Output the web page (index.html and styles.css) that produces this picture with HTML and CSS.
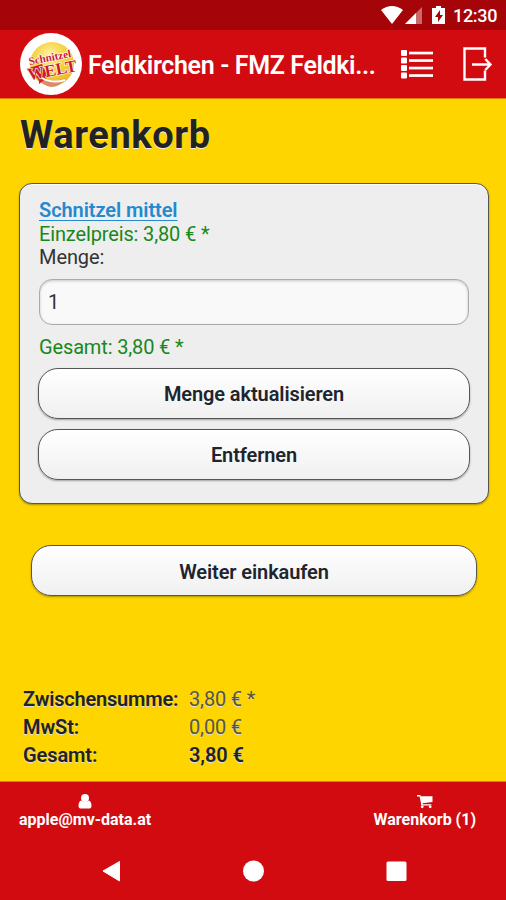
FILE: index.html
```html
<!DOCTYPE html>
<html lang="de">
<head>
<meta charset="utf-8">
<meta name="viewport" content="width=device-width, initial-scale=1">
<title>Warenkorb</title>
<link rel="stylesheet" href="styles.css">
</head>
<body>
<div class="statusbar">
  <svg class="status-icons" width="68" height="30" viewBox="0 0 68 30">
    <path d="M1 10Q12 2 23 10L12 24Z" fill="#fff"/>
    <path d="M42 7V24H25Z" fill="#fff" opacity=".4"/>
    <path d="M36 13V24H25Z" fill="#fff"/>
    <path d="M56 6h5v2h4v16H52V8h4Z" fill="#fff"/>
    <path d="M60 10l-5 7h3v5l5-7h-3Z" fill="#a50509"/>
  </svg>
  <span class="clock">12:30</span>
</div>
<header class="topbar">
  <svg class="logo" width="62" height="62" viewBox="0 0 62 62">
    <defs>
      <radialGradient id="ball" cx=".45" cy=".3" r=".75">
        <stop offset="0" stop-color="#fff3a8"/>
        <stop offset=".45" stop-color="#f6d443"/>
        <stop offset="1" stop-color="#e9b51d"/>
      </radialGradient>
    </defs>
    <circle cx="31" cy="31" r="31" fill="#fff"/>
    <circle cx="32" cy="31" r="22" fill="url(#ball)"/>
    <path d="M18 45Q30 51 46 45Q40 54 31 54Q23 53 18 45Z" fill="#dc8a68"/>
    <path d="M6 36L22 31L28 44L19 51Q20 44 12 43L14 39Z" fill="#cf1f2c"/>
    <path d="M22 45Q32 51 45 47" fill="none" stroke="#fff" stroke-width="2"/>
    <g class="logo-text" transform="rotate(-11 31 31)">
      <text class="logo-top" x="31" y="28" text-anchor="middle">Schnitzel</text>
      <text class="logo-main" x="31" y="43" text-anchor="middle">WELT</text>
    </g>
  </svg>
  <div class="store">Feldkirchen - FMZ Feldki...</div>
  <svg class="icon-list" width="32" height="29" viewBox="0 0 32 29">
    <g fill="#fff">
      <rect y="0" width="6" height="6" rx="1"/><rect y="7.5" width="6" height="6" rx="1"/><rect y="15" width="6" height="6" rx="1"/><rect y="22.5" width="6" height="6" rx="1"/>
      <rect x="8" y="1.7" width="24" height="2.7"/><rect x="8" y="9.2" width="24" height="2.7"/><rect x="8" y="16.7" width="24" height="2.7"/><rect x="8" y="24.2" width="24" height="2.7"/>
    </g>
  </svg>
  <svg class="icon-exit" width="30" height="34" viewBox="0 0 30 34">
    <path d="M22 10.5V1.5H1.500V32.5H22V23.500M9 17.500H27.500M22.300 12L27.500 17.500L22.300 23" fill="none" stroke="#fff" stroke-width="2.400"/>
  </svg>
</header>
<main class="content">
  <h1 class="title">Warenkorb</h1>
  <section class="card">
    <div class="line"><a class="product" href="#">Schnitzel mittel</a></div>
    <div class="line price">Einzelpreis: 3,80 € *</div>
    <div class="line menge">Menge:</div>
    <input class="qty" type="text" value="1" aria-label="Menge">
    <div class="line price total">Gesamt: 3,80 € *</div>
    <button class="btn">Menge aktualisieren</button>
    <button class="btn">Entfernen</button>
  </section>
  <button class="btn shop">Weiter einkaufen</button>
  <dl class="summary">
    <dt class="label wide">Zwischensumme:</dt><dd>3,80 € *</dd>
    <dt class="label">MwSt:</dt><dd>0,00 €</dd>
    <dt class="label">Gesamt:</dt><dd class="sum">3,80 €</dd>
  </dl>
</main>
<footer class="bottombar">
  <div class="tabs">
    <div class="tab">
      <svg width="14" height="15" viewBox="0 0 14 15"><circle cx="7" cy="4" r="4" fill="#fff"/><path d="M3 6.500Q7 9 11 6.500Q13.500 7.500 13.500 12Q13.500 14.500 11.500 14.500H2.500Q.5 14.500.5 12Q.5 7.500 3 6.500Z" fill="#fff"/></svg>
      <span class="mail">apple@mv-data.at</span>
    </div>
    <div class="tab">
      <svg width="16" height="15" viewBox="0 0 16 15"><path d="M0 1H3.300L3.800 2.300H15.500V8L5.600 9.300V10.300H14.300V11.600H4.200L4 9.200L2.600 2.400H0Z" fill="#fff"/><circle cx="5.200" cy="12.800" r="1.400" fill="#fff"/><circle cx="13.200" cy="12.800" r="1.400" fill="#fff"/></svg>
      <span class="cart">Warenkorb (1)</span>
    </div>
  </div>
  <svg class="nav" width="506" height="58" viewBox="0 0 506 58">
    <g fill="#fff"><path d="M103 29L119.500 19.500V39Z" stroke="#fff" stroke-linejoin="round"/><circle cx="253.500" cy="29" r="10.500"/><rect x="386.500" y="19.500" width="20" height="19.500" rx="1.500"/></g>
  </svg>
</footer>
</body>
</html>
```

FILE: styles.css
```css
* { box-sizing: border-box; }
body {
  margin: 0;
  width: 506px;
  height: 900px;
  display: flex;
  flex-direction: column;
  overflow: hidden;
  background: #ffd500;
  color: #222;
  font-family: Roboto, "Liberation Sans", sans-serif;
  font-size: 20px;
}
.statusbar {
  height: 30px;
  flex: none;
  display: flex;
  justify-content: flex-end;
  padding-right: 9px;
  background: #a50509;
  color: #fff;
}
.status-icons { margin-right: 5px; }
.clock {
  width: 44px;
  font-size: 18px;
  font-weight: 500;
  line-height: 32px;
  letter-spacing: -.3px;
  white-space: nowrap;
}
.topbar {
  height: 69px;
  flex: none;
  display: flex;
  align-items: center;
  padding-left: 20px;
  background: #d20b11;
  border-bottom: 1px solid #e87a0a;
  color: #fff;
}
.logo { flex: none; }
.logo-text {
  font-family: "Liberation Serif", serif;
  font-weight: bold;
  fill: #cc1a2b;
  stroke: #fff;
  stroke-width: 1.2px;
  paint-order: stroke;
}
.logo-top { font-size: 11px; }
.logo-main { font-size: 17px; }
.store {
  width: 289px;
  margin: 3px 24px 0 6px;
  flex: none;
  font-size: 25px;
  font-weight: 600;
  letter-spacing: -.37px;
  white-space: nowrap;
}
.icon-list { flex: none; }
.icon-exit { flex: none; margin-left: 30px; }
.content {
  height: 682px;
  flex: none;
  display: flex;
  flex-direction: column;
}
.title {
  margin: 12px 0 0 20px;
  font-size: 38px;
  font-weight: 700;
  line-height: 48px;
  letter-spacing: .6px;
  text-shadow: 0 1px 0 #eee;
}
.card {
  width: 470px;
  height: 321px;
  flex: none;
  margin: 24px 0 0 19px;
  padding: 15px 19px 0;
  display: flex;
  flex-direction: column;
  border: 1px solid #555;
  border-radius: 13px;
  background: #eee;
  box-shadow: 0 1px 2px #0005, inset 0 1px 0 #fff;
}
.line {
  height: 23.5px;
  flex: none;
  line-height: 23.5px;
  letter-spacing: -.08px;
  white-space: nowrap;
}
.product {
  color: #2489ce;
  font-weight: 600;
  text-decoration-thickness: 1px;
  text-underline-offset: 3px;
}
.price { color: #18881b; letter-spacing: -.14px; }
.menge { color: #333; }
.qty {
  width: 430px;
  height: 46px;
  flex: none;
  margin-top: 9px;
  padding: 0 8px;
  border: 1.500px solid #aaa;
  border-radius: 13px;
  background: #f9f9f9;
  box-shadow: inset 0 1px 3px #0003;
  color: #333;
  font: 20px Roboto, sans-serif;
}
.total { margin-top: 11px; }
.btn {
  width: 432px;
  height: 51px;
  flex: none;
  margin: 10px 0 0 -1px;
  padding: 2px 0 0;
  border: 1px solid #555;
  border-radius: 20px;
  background: linear-gradient(#fff, #f0f0f0);
  box-shadow: 0 1px 2px #0005;
  color: #20242c;
  font: 600 20px Roboto, sans-serif;
  letter-spacing: -.1px;
}
.total + .btn { margin-top: 8.500px; }
.shop {
  width: 446px;
  margin: 41px 0 0 31px;
}
.summary {
  margin: 88.500px 0 0 23px;
  display: grid;
  grid-template-columns: 166px 1fr;
  grid-auto-rows: 28.300px;
  line-height: 28.300px;
  text-shadow: 0 1px 0 #ddd;
}
.summary dd { margin: 0; color: #5a5533; letter-spacing: -.15px; }
.summary .label, .summary .sum { font-weight: 600; color: #222; letter-spacing: -.1px; }
.summary .wide { letter-spacing: -.2px; }
.bottombar {
  flex: 1;
  background: #d20b11;
  border-top: 1px solid #e87a0a;
  color: #fff;
}
.tabs {
  height: 60px;
  padding: 12px 30px 0 19px;
  display: flex;
  justify-content: space-between;
  font-size: 16px;
  font-weight: 700;
}
.tab {
  display: flex;
  flex-direction: column;
  align-items: center;
}
.tab span { line-height: 21px; white-space: nowrap; }
.nav { display: block; }
```
